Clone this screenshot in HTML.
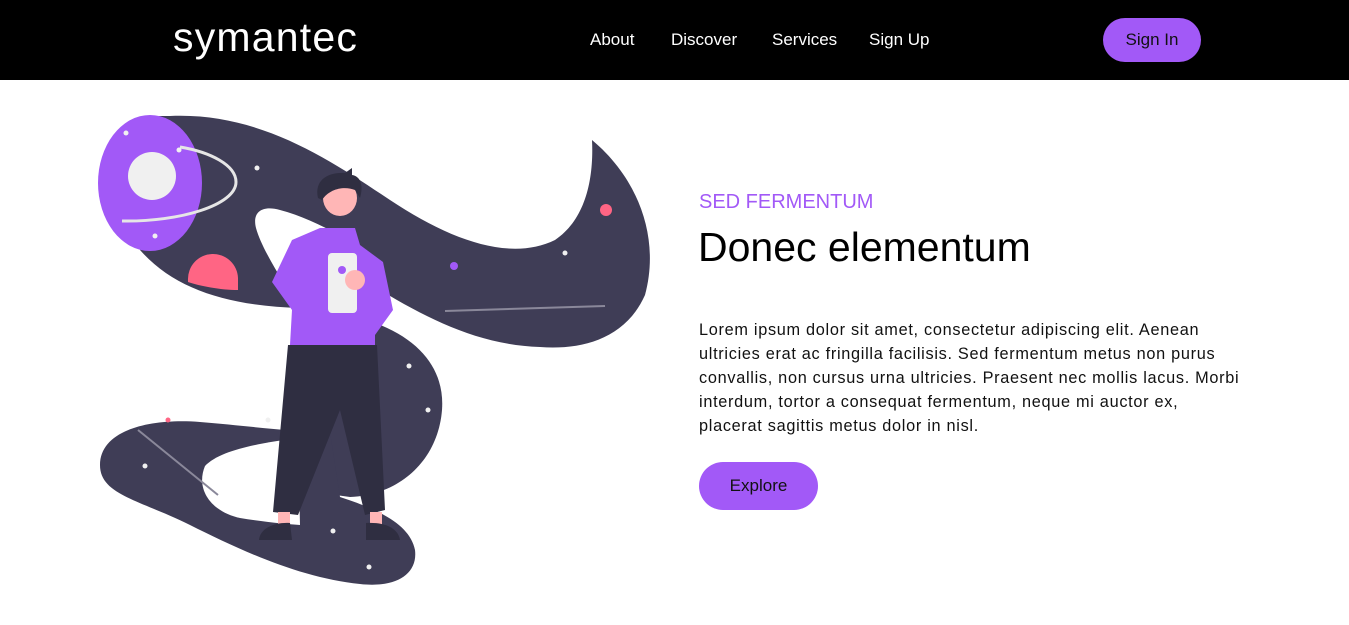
<!DOCTYPE html>
<html><head><meta charset="utf-8"><style>
*{margin:0;padding:0;box-sizing:border-box}
body{width:1349px;height:625px;background:#fff;font-family:"Liberation Sans",sans-serif;position:relative;overflow:hidden}
nav{position:absolute;left:0;top:0;width:1349px;height:80px;background:#000}
.logo{position:absolute;left:173px;top:14px;color:#fff;font-size:41px;letter-spacing:1.2px}
.links a{position:absolute;top:30px;color:#fff;font-size:17px;text-decoration:none}
.signin{position:absolute;left:1103px;top:18px;width:98px;height:44px;border-radius:22px;background:#a259f7;color:#111;font-size:17px;text-align:center;line-height:44px}
.sub{position:absolute;left:699px;top:191px;color:#a259f7;font-size:20px}
h1{position:absolute;left:698px;top:224px;font-size:41px;font-weight:normal;color:#000}
p{position:absolute;left:699px;top:318px;font-size:16.3px;line-height:24px;color:#111;white-space:nowrap;letter-spacing:0.7px}
.btn{position:absolute;left:699px;top:462px;width:119px;height:48px;border-radius:24px;background:#a259f7;color:#111;font-size:17px;text-align:center;line-height:48px}
svg{position:absolute;left:0;top:0}
</style></head><body>
<nav>
<div class="logo">symantec</div>
<div class="links"><a style="left:590px">About</a><a style="left:671px">Discover</a><a style="left:772px">Services</a><a style="left:869px">Sign Up</a></div>
<div class="signin">Sign In</div>
</nav>
<svg width="700" height="625" viewBox="0 0 700 625">
<g fill="#3f3d56">
<path d="M170,116 C260,112 330,160 390,200 C450,240 510,262 555,240 C585,220 594,180 592,140 C640,180 660,240 645,295 C625,340 580,350 540,347 C480,345 430,320 380,290 L300,308 C230,306 175,290 140,250 L150,116 Z"/>
<path d="M300,240 C340,250 380,270 390,300 L330,310 Z"/>
<path d="M360,318 C420,335 445,370 442,410 C438,460 400,495 350,497 L300,490 L300,320 Z"/>
<path d="M100,465 C100,430 150,418 200,422 C250,426 290,432 330,432 L340,497 C380,510 410,525 415,550 C418,575 395,588 360,584 C300,578 240,550 190,525 C140,500 100,495 100,465 Z"/>
</g>
<g fill="#fff">
<path d="M300,308 C285,285 262,250 256,228 C252,212 262,205 280,210 C300,215 320,225 340,235 L320,300 Z"/>
<path d="M298,438 C260,443 220,450 205,466 C195,490 212,512 240,518 C265,522 285,524 300,525 Z"/>
</g>
<ellipse cx="150" cy="183" rx="52" ry="68" fill="#a259f7"/>
<circle cx="152" cy="176" r="24" fill="#f0f0f0"/>
<path d="M122,221 C180,222 236,205 236,182 C236,165 210,152 180,147" fill="none" stroke="#e6e6e6" stroke-width="3"/>
<path d="M188,280 A25,25 0 0 1 238,278 L238,290 C220,290 200,286 188,282Z" fill="#ff6584"/>
<circle cx="606" cy="210" r="6" fill="#ff6584"/>
<circle cx="454" cy="266" r="4" fill="#a259f7"/>
<g fill="#f0f0f0"><circle cx="126" cy="133" r="2.5"/><circle cx="179" cy="150" r="2.5"/><circle cx="155" cy="236" r="2.5"/><circle cx="257" cy="168" r="2.5"/><circle cx="565" cy="253" r="2.5"/><circle cx="409" cy="366" r="2.5"/><circle cx="428" cy="410" r="2.5"/><circle cx="268" cy="420" r="2.5"/><circle cx="145" cy="466" r="2.5"/><circle cx="333" cy="531" r="2.5"/><circle cx="369" cy="567" r="2.5"/></g>
<circle cx="168" cy="420" r="2.5" fill="#ff6584"/>
<path d="M445,311 L605,306" stroke="#8a889a" stroke-width="2"/>
<path d="M138,430 L218,495" stroke="#8a889a" stroke-width="2"/>
<path d="M288,345 L377,345 L385,510 L365,515 L340,410 L298,515 L273,512 Z" fill="#2f2e41"/>
<path d="M292,240 L320,228 L355,228 L360,245 L383,262 L393,310 L375,335 L375,345 L290,345 L292,310 L272,282 Z" fill="#a259f7"/>
<rect x="328" y="253" width="29" height="60" rx="4" fill="#f0f0f0"/>
<circle cx="342" cy="270" r="4" fill="#a259f7"/>
<circle cx="355" cy="280" r="10" fill="#ffb6b6"/>
<ellipse cx="340" cy="198" rx="17" ry="18" fill="#ffb6b6"/>
<path d="M318,198 C314,180 328,172 345,173 L352,168 L352,175 C360,176 364,185 360,198 L355,190 C345,186 330,188 322,200Z" fill="#2f2e41"/>
<rect x="278" y="512" width="12" height="14" fill="#ffb6b6"/><rect x="370" y="512" width="12" height="14" fill="#ffb6b6"/>
<path d="M259,540 C260,528 275,522 290,523 L292,540 Z" fill="#2f2e41"/>
<path d="M366,540 L366,523 C385,522 398,528 400,540 Z" fill="#2f2e41"/>
</svg>
<div class="sub">SED FERMENTUM</div>
<h1>Donec elementum</h1>
<p>Lorem ipsum dolor sit amet, consectetur adipiscing elit. Aenean<br>ultricies erat ac fringilla facilisis. Sed fermentum metus non purus<br>convallis, non cursus urna ultricies. Praesent nec mollis lacus. Morbi<br>interdum, tortor a consequat fermentum, neque mi auctor ex,<br>placerat sagittis metus dolor in nisl.</p>
<div class="btn">Explore</div>
</body></html>
